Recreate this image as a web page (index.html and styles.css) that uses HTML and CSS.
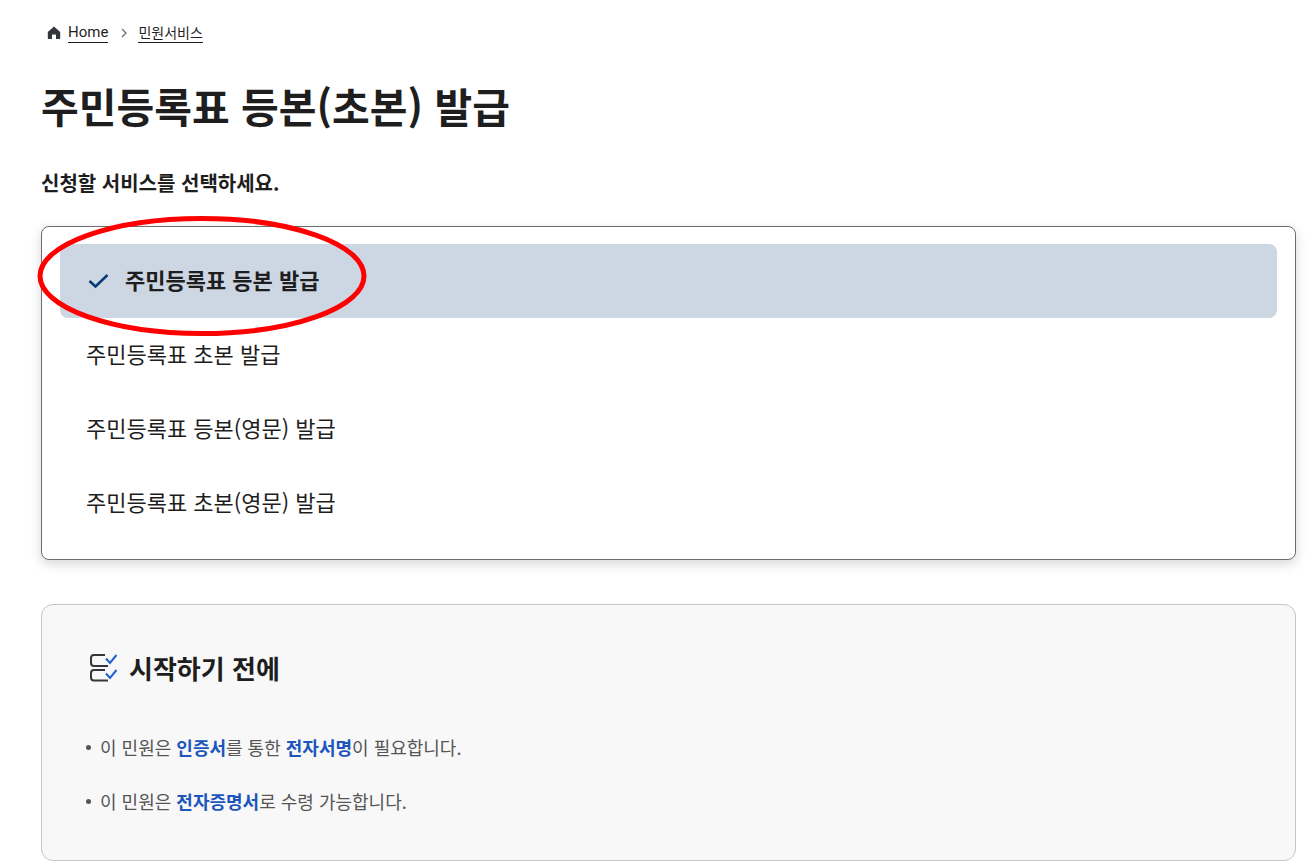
FILE: index.html
```
<!DOCTYPE html>
<html lang="ko">
<head>
<meta charset="utf-8">
<meta name="viewport" content="width=device-width, initial-scale=1">
<title>주민등록표 등본(초본) 발급</title>
<link rel="stylesheet" href="styles.css">
</head>
<body>
<main class="page">
  <nav class="breadcrumb" aria-label="breadcrumb">
    <svg class="home-icon" viewBox="0 0 14 14" aria-hidden="true"><path d="M7 .5 13.2 6v6.2q0 .8-.8.8H9V9.2q0-.7-.7-.7H5.7q-.7 0-.7.7V13H1.6q-.8 0-.8-.8V6Z" fill="#33363d"/></svg>
    <a class="crumb" href="#">Home</a>
    <svg class="chevron" viewBox="0 0 6 10" aria-hidden="true"><path d="M1 1l4 4-4 4" fill="none" stroke="#6d6d6d" stroke-width="1.3"/></svg>
    <a class="crumb crumb-ko" href="#">민원서비스</a>
  </nav>
  <h1 class="title">주민등록표 등본(초본) 발급</h1>
  <form class="service-form">
    <h2 class="prompt" id="prompt">신청할 서비스를 선택하세요.</h2>
    <div class="options" role="radiogroup" aria-labelledby="prompt">
      <label class="option" for="s1">
        <input class="radio" type="radio" name="service" id="s1" checked>
        <svg class="check" viewBox="0 0 22 16" aria-hidden="true"><path d="M2.5 8 8.500 13.5 20.5 2" fill="none" stroke="#063a74" stroke-width="2.5"/></svg>
        <span>주민등록표 등본 발급</span>
      </label>
      <label class="option" for="s2">
        <input class="radio" type="radio" name="service" id="s2">
        <svg class="check" viewBox="0 0 22 16" aria-hidden="true"><path d="M2.5 8 8.500 13.5 20.5 2" fill="none" stroke="#063a74" stroke-width="2.5"/></svg>
        <span>주민등록표 초본 발급</span>
      </label>
      <label class="option" for="s3">
        <input class="radio" type="radio" name="service" id="s3">
        <svg class="check" viewBox="0 0 22 16" aria-hidden="true"><path d="M2.5 8 8.500 13.5 20.5 2" fill="none" stroke="#063a74" stroke-width="2.5"/></svg>
        <span>주민등록표 등본(영문) 발급</span>
      </label>
      <label class="option" for="s4">
        <input class="radio" type="radio" name="service" id="s4">
        <svg class="check" viewBox="0 0 22 16" aria-hidden="true"><path d="M2.5 8 8.500 13.5 20.5 2" fill="none" stroke="#063a74" stroke-width="2.5"/></svg>
        <span>주민등록표 초본(영문) 발급</span>
      </label>
      <svg class="highlight" viewBox="0 0 330 120" aria-hidden="true"><ellipse cx="165" cy="60" rx="162" ry="57.500" fill="none" stroke="#fe0000" stroke-width="5"/></svg>
    </div>
  </form>
  <section class="notice">
    <h2 class="notice-title">
      <svg class="list-icon" viewBox="0 0 30 30" aria-hidden="true">
        <g fill="none" stroke-width="2"><path d="M16 2H5Q2 2 2 5v5q0 3 3 3h14M16 17H5q-3 0-3 3v4.500q0 3 3 3h14" stroke="#33363d"/><path d="M17 5.500l4 4.500L27.500 2M17 20.500l4 4.500L27.500 17" stroke="#2460cf"/></g>
      </svg>
      <span>시작하기 전에</span>
    </h2>
    <ul class="notes">
      <li class="note"><span>이 민원은 <strong class="key">인증서</strong>를 통한 <strong class="key">전자서명</strong>이 필요합니다.</span></li>
      <li class="note"><span>이 민원은 <strong class="key">전자증명서</strong>로 수령 가능합니다.</span></li>
    </ul>
  </section>
</main>
</body>
</html>
```
FILE: styles.css
```
* {
  box-sizing: border-box;
}

body {
  margin: 0;
  background: #fff;
  color: #1e1e1e;
  font-family: "Noto Sans CJK KR", "Noto Sans", sans-serif;
}

.page {
  padding: 20px 16px 0 41px;
}

.breadcrumb {
  display: flex;
  align-items: center;
  height: 25px;
  padding-left: 6px;
}

.home-icon {
  width: 14px;
  height: 14px;
  margin-right: 7px;
}

.chevron {
  width: 6px;
  height: 10px;
  margin: 0 11px 0 13px;
}

.crumb {
  border-bottom: 1px solid #1e1e1e;
  color: #1e1e1e;
  font: 15px/20px Roboto, sans-serif;
  text-decoration: none;
}

.crumb-ko {
  font: 14px/20px "Noto Sans CJK KR", sans-serif;
}

.title {
  margin: 30px 0 0;
  font-size: 41px;
  line-height: 60px;
}

.prompt {
  margin: 33px 0 0;
  font-size: 20px;
  line-height: 30px;
}

.options {
  position: relative;
  display: flex;
  flex-direction: column;
  margin-top: 28px;
  padding: 17px 18px 19px;
  border: 1px solid #6d6d6d;
  border-radius: 8px;
  background: #fff;
  box-shadow: 0 4px 12px rgba(0, 0, 0, 0.16);
}

.option {
  display: flex;
  align-items: center;
  height: 74px;
  padding: 0 26px;
  border-radius: 8px;
  font-size: 22px;
  cursor: pointer;
}

.option span {
  padding-bottom: 4px;
  line-height: 32px;
}

.radio {
  width: 0;
  height: 0;
  margin: 0;
  appearance: none;
}

.check {
  display: none;
  width: 22px;
  height: 16px;
  margin: 0 16px 0 1px;
}

.option:has(.radio:checked) {
  background: #cdd6e3;
  font-weight: 700;
}

.radio:checked + .check {
  display: block;
}

.radio:focus-visible ~ span {
  text-decoration: underline;
}

.highlight {
  position: absolute;
  top: -11px;
  left: -5px;
  width: 330px;
  height: 120px;
  pointer-events: none;
}

.notice {
  margin-top: 44px;
  padding: 44px 44px 34px;
  border: 1px solid #c6c6c6;
  border-radius: 12px;
  background: #f8f8f8;
}

.notice-title {
  display: flex;
  align-items: center;
  gap: 10px;
  margin: 0;
  padding-left: 3px;
  font-size: 26px;
  line-height: 38px;
}

.list-icon {
  width: 30px;
  height: 30px;
}

.notes {
  display: flex;
  flex-direction: column;
  gap: 4px;
  margin: 35px 0 0;
  padding: 0;
  list-style: none;
}

.note {
  display: flex;
  align-items: center;
  gap: 9px;
  color: #555;
  font-size: 18px;
  line-height: 50px;
}

.note::before {
  width: 5px;
  height: 5px;
  border-radius: 50%;
  background: #555;
  content: "";
}

.key {
  color: #1d56bc;
}
```
